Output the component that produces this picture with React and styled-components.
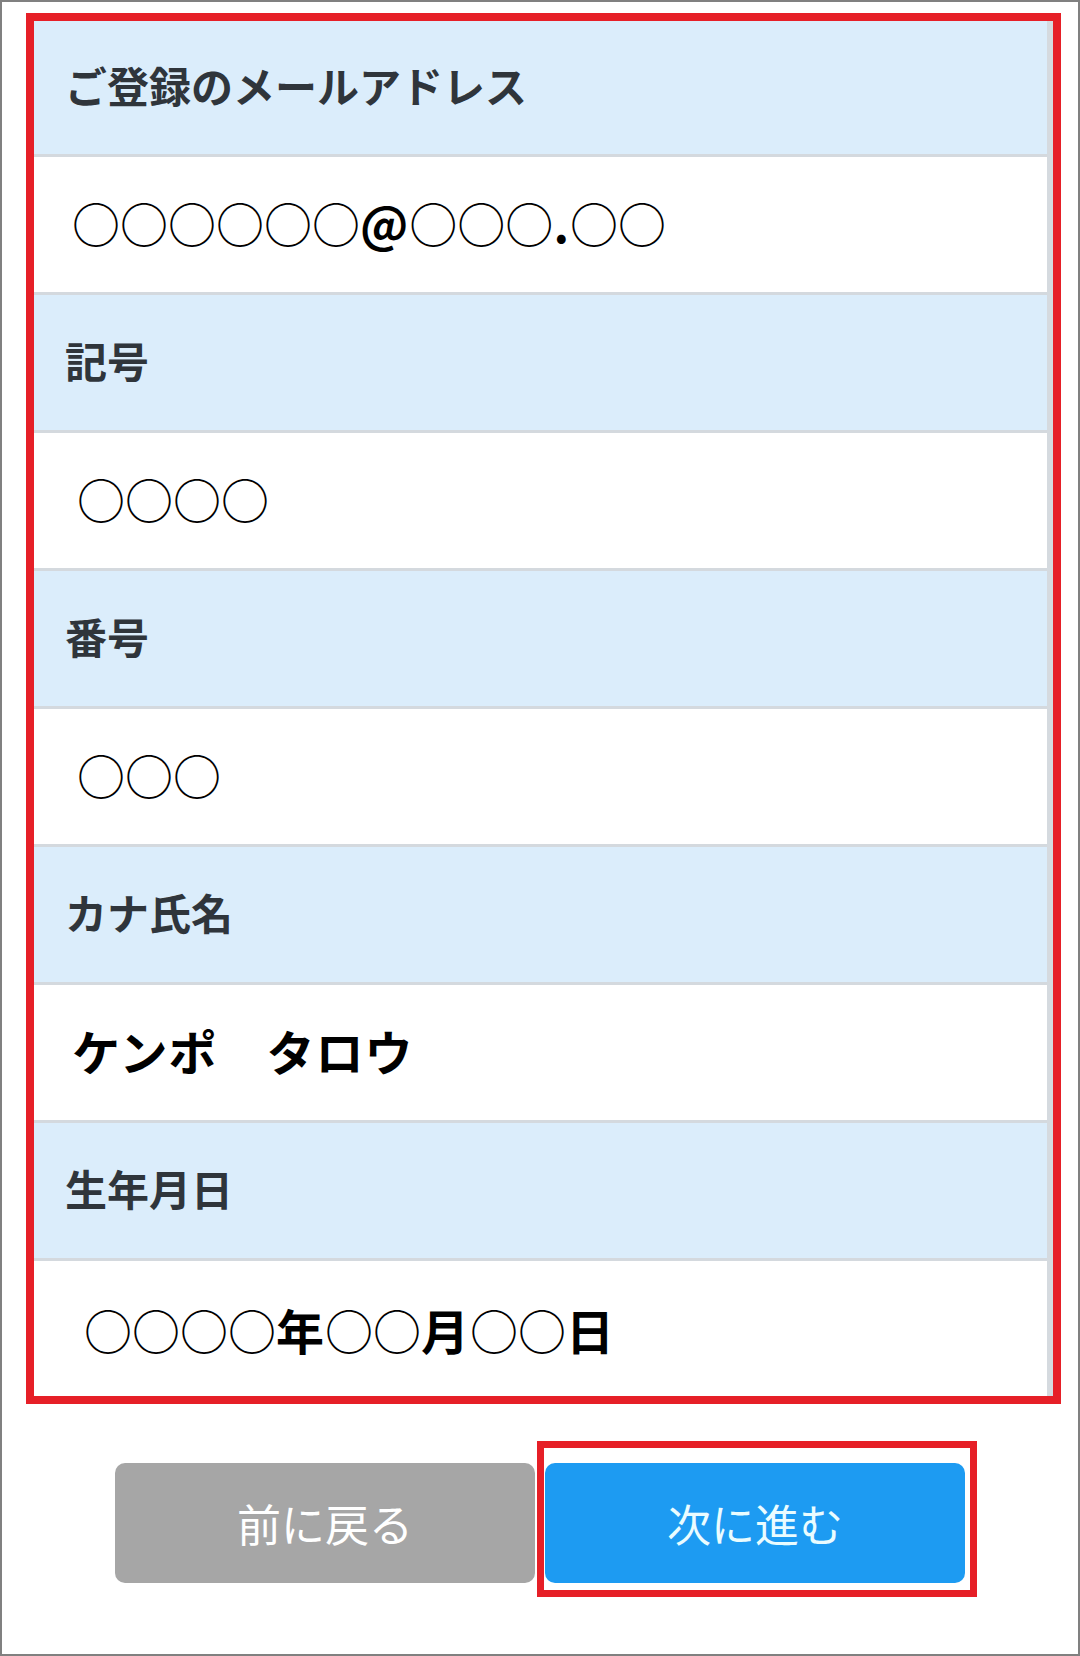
import React from 'react';
import styled, { createGlobalStyle } from 'styled-components';

const GlobalStyle = createGlobalStyle`
  html, body {
    margin: 0;
    padding: 0;
    background: #ffffff;
  }
  body {
    font-family: "Noto Sans CJK JP", "Noto Sans", sans-serif;
  }
`;

const Page = styled.div`
  box-sizing: border-box;
  width: 1080px;
  height: 1656px;
  border: 2px solid #808080;
  padding: 11px 17px 0 24px;
  display: flex;
  flex-direction: column;
  background: #fff;
`;

// red highlight frame around the form table
const Frame = styled.div`
  box-sizing: border-box;
  width: 1035px;
  border: 8px solid #e61f27;
`;

const Table = styled.div`
  display: flex;
  flex-direction: column;
  border-right: 6px solid #d5dadf;
`;

const LabelRow = styled.div`
  box-sizing: border-box;
  height: ${p => (p.$first ? 136 : 138)}px;
  display: flex;
  align-items: center;
  padding: 0 0 6px 31px;
  background: #dbedfb;
  border-bottom: 3px solid #d4d9de;
  color: #2f353b;
  font-size: 42px;
  font-weight: 700;
`;

const ValueRow = styled.div`
  box-sizing: border-box;
  height: ${p => (p.$last ? 135 : 138)}px;
  display: flex;
  align-items: center;
  padding: 0 0 ${p => (p.$last ? 0 : 6)}px ${p => 38 + (p.$indent || 0)}px;
  background: #ffffff;
  border-bottom: ${p => (p.$last ? 'none' : '3px solid #d4d9de')};
  color: #000;
  font-size: 48px;
  font-weight: 700;
  white-space: pre;
`;

const Mark = styled.span`
  font-weight: 400;
`;

const Kana = styled.span`
  letter-spacing: 1px;
`;

const Buttons = styled.div`
  margin-top: 59px;
  display: flex;
  justify-content: center;
  gap: 10px;
  margin-left: -7px;
`;

const Button = styled.button`
  box-sizing: border-box;
  width: 420px;
  height: 120px;
  border: none;
  border-radius: 10px;
  background: ${p => (p.$primary ? '#1d9bf2' : '#a6a6a6')};
  color: ${p => (p.$primary ? '#eafcff' : '#ffffff')};
  font-family: "Noto Sans CJK JP", "Noto Sans", sans-serif;
  font-size: 44px;
  font-weight: 400;
  padding: 0;
  cursor: pointer;
`;

// annotation frame that sits over the next button
const Highlight = styled.div`
  position: relative;
  &::after {
    content: '';
    position: absolute;
    top: -22px;
    left: -8px;
    right: -12px;
    bottom: -14px;
    border: 7px solid #e61f27;
    pointer-events: none;
  }
`;

const rows = [
  { label: 'ご登録のメールアドレス', value: '○○○○○○@○○○.○○', indent: 0 },
  { label: '記号', value: '○○○○', indent: 5 },
  { label: '番号', value: '○○○', indent: 5 },
  { label: 'カナ氏名', value: 'ケンポ　タロウ', indent: 0 },
  { label: '生年月日', value: '○○○○年○○月○○日', indent: 12 },
];

// circles are thin in the reference, the rest bold
function Value({ text }) {
  const parts = text.split(/(○+)/).filter(Boolean);
  return parts.map((t, i) => (t[0] === '○' ? <Mark key={i}>{t}</Mark> : <Kana key={i}>{t}</Kana>));
}

export default function App() {
  return (
    <>
      <GlobalStyle />
      <Page>
        <Frame>
          <Table>
            {rows.map((r, i) => (
              <React.Fragment key={r.label}>
                <LabelRow $first={i === 0}>{r.label}</LabelRow>
                <ValueRow $indent={r.indent} $last={i === rows.length - 1}>
                  <Value text={r.value} />
                </ValueRow>
              </React.Fragment>
            ))}
          </Table>
        </Frame>
        <Buttons>
          <Button>前に戻る</Button>
          <Highlight>
            <Button $primary>次に進む</Button>
          </Highlight>
        </Buttons>
      </Page>
    </>
  );
}
